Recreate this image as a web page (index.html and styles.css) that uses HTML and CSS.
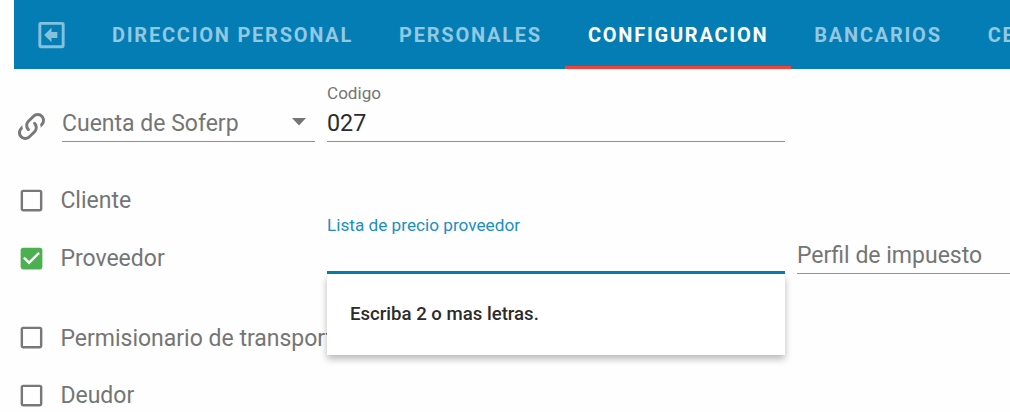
FILE: index.html
```html
<!DOCTYPE html>
<html lang="es">
<head>
    <meta charset="UTF-8">
    <meta name="viewport" content="width=device-width, initial-scale=1.0">
    <title>Configuracion</title>
    <link rel="stylesheet" href="styles.css">
</head>
<body>
    <nav class="tabs">
        <a class="tab tab-icon">
            <svg viewBox="0 0 24 24"><path d="M4.6 3H19.4A1.6 1.6 0 0 1 21 4.6V19.4A1.6 1.6 0 0 1 19.4 21H4.6A1.6 1.6 0 0 1 3 19.4V4.6A1.6 1.6 0 0 1 4.6 3M5 5V19H19V5H5M7 12L12 7V10H16V14H12V17L7 12Z"/></svg>
        </a>
        <a class="tab">DIRECCION PERSONAL</a>
        <a class="tab">PERSONALES</a>
        <a class="tab active">CONFIGURACION</a>
        <a class="tab">BANCARIOS</a>
        <a class="tab">CERTIFICADOS</a>
    </nav>

    <div class="form-grid">
        <div class="account">
            <svg class="link-icon" viewBox="0 0 24 24"><path d="M10.59,13.41C11,13.8 11,14.44 10.59,14.83C10.2,15.22 9.56,15.22 9.17,14.83C7.22,12.88 7.22,9.71 9.17,7.76V7.76L12.71,4.22C14.66,2.27 17.83,2.27 19.78,4.22C21.73,6.17 21.73,9.34 19.78,11.29L18.29,12.78C18.3,11.96 18.17,11.14 17.89,10.36L18.36,9.88C19.54,8.71 19.54,6.81 18.36,5.64C17.19,4.46 15.29,4.46 14.12,5.64L10.59,9.17C9.41,10.34 9.41,12.24 10.59,13.41M13.41,9.17C13.8,8.78 14.44,8.78 14.83,9.17C16.78,11.12 16.78,14.29 14.83,16.24V16.24L11.29,19.78C9.34,21.73 6.17,21.73 4.22,19.78C2.27,17.83 2.27,14.66 4.22,12.71L5.71,11.22C5.7,12.04 5.83,12.86 6.11,13.65L5.64,14.12C4.46,15.29 4.46,17.19 5.64,18.36C6.81,19.54 8.71,19.54 9.88,18.36L13.41,14.83C14.59,13.66 14.59,11.76 13.41,10.59C13,10.2 13,9.56 13.41,9.17Z"/></svg>
            <div class="field select">
                <span class="placeholder">Cuenta de Soferp</span>
                <svg class="caret" viewBox="0 0 14 8"><path d="M0 0H14L7 7.5Z"/></svg>
            </div>
        </div>
        <div class="field">
            <span class="label">Codigo</span>
            <span class="value">027</span>
        </div>

        <div class="checks row-two">
            <div class="check">
                <svg viewBox="0 0 24 24"><path d="M19,3H5C3.89,3 3,3.89 3,5V19A2,2 0 0,0 5,21H19A2,2 0 0,0 21,19V5C21,3.89 20.1,3 19,3M19,5V19H5V5H19Z"/></svg>
                <span>Cliente</span>
            </div>
            <div class="check checked">
                <svg viewBox="0 0 24 24"><path d="M10,17L5,12L6.41,10.58L10,14.17L17.59,6.58L19,8M19,3H5C3.89,3 3,3.89 3,5V19A2,2 0 0,0 5,21H19A2,2 0 0,0 21,19V5C21,3.89 20.1,3 19,3Z"/></svg>
                <span>Proveedor</span>
            </div>
        </div>
        <div class="field focused">
            <span class="label">Lista de precio proveedor</span>
            <span class="value"></span>
            <div class="menu">Escriba 2 o mas letras.</div>
        </div>
        <div class="field tax">
            <span class="placeholder">Perfil de impuesto</span>
        </div>

        <div class="checks row-three">
            <div class="check">
                <svg viewBox="0 0 24 24"><path d="M19,3H5C3.89,3 3,3.89 3,5V19A2,2 0 0,0 5,21H19A2,2 0 0,0 21,19V5C21,3.89 20.1,3 19,3M19,5V19H5V5H19Z"/></svg>
                <span>Permisionario de transporte</span>
            </div>
            <div class="check">
                <svg viewBox="0 0 24 24"><path d="M19,3H5C3.89,3 3,3.89 3,5V19A2,2 0 0,0 5,21H19A2,2 0 0,0 21,19V5C21,3.89 20.1,3 19,3M19,5V19H5V5H19Z"/></svg>
                <span>Deudor</span>
            </div>
        </div>
    </div>
</body>
</html>
```
FILE: styles.css
```css
* {
    box-sizing: border-box;
    margin: 0;
    padding: 0;
}

body {
    background: #fefefe;
    font-family: Roboto, sans-serif;
    font-size: 23px;
    color: #757575;
    padding-left: 14px;
    height: 412px;
    overflow: hidden;
}

.tabs {
    display: flex;
    height: 69px;
    background: #047db5;
    overflow: hidden;
}

.tab {
    display: flex;
    flex: none;
    align-items: center;
    padding: 3px 23px 0;
    border-bottom: 3px solid transparent;
    font-size: 20px;
    font-weight: 700;
    letter-spacing: 1.76px;
    color: #93c8e0;
    white-space: nowrap;
}

.tab.active {
    color: white;
    border-bottom-color: #f44336;
}

.tab-icon {
    padding: 3px 20px 0;
    width: 75px;
}

.tab-icon svg {
    width: 36px;
    height: 36px;
    fill: #86c1dc;
}

.form-grid {
    display: grid;
    grid-template-columns: 301px 458px 213px;
    grid-template-rows: 73px 144px 126px;
    column-gap: 12px;
    overflow: hidden;
}

.account {
    display: flex;
    align-items: flex-end;
    gap: 13px;
}

.link-icon {
    flex: none;
    width: 35px;
    height: 35px;
    margin-bottom: -2px;
    fill: #787878;
}

.field {
    position: relative;
    display: flex;
    flex-direction: column;
    justify-content: flex-end;
    align-self: end;
    border-bottom: 1px solid #909090;
    white-space: nowrap;
}

.select {
    flex: 1;
    flex-direction: row;
    justify-content: space-between;
    align-items: center;
    padding-right: 9px;
}

.placeholder,
.value {
    height: 37px;
    line-height: 39px;
}

.value {
    font-size: 23.3px;
    color: #2b2b2b;
}

.label {
    height: 22px;
    line-height: 22px;
    font-size: 17.1px;
}

.caret {
    width: 14px;
    height: 8px;
    margin-bottom: 2px;
    fill: #757575;
}

.checks {
    grid-column: 1;
}

.row-two {
    padding-top: 30px;
}

.row-three {
    padding-top: 23px;
}

.check {
    display: flex;
    align-items: center;
    gap: 14.4px;
    height: 57.5px;
    padding-left: 3px;
    white-space: nowrap;
}

.row-three .check span {
    padding-top: 1px;
}

.check svg {
    flex: none;
    width: 29px;
    height: 29px;
    fill: #787878;
}

.check.checked svg {
    fill: #4caf50;
}

.focused {
    border-bottom: 3px solid #047db5;
    margin-bottom: 12px;
}

.focused .label {
    font-size: 17.2px;
    color: #1c8fc1;
    margin-bottom: -2px;
}

.tax {
    margin-bottom: 12px;
}

.menu {
    position: absolute;
    top: calc(100% + 3px);
    left: 0;
    width: 100%;
    height: 81px;
    padding: 0 23px;
    line-height: 81px;
    font-size: 18.6px;
    font-weight: 500;
    color: #2b2b2b;
    background: white;
    box-shadow: 0 4px 7px rgba(0, 0, 0, 0.28);
    z-index: 1;
}
```
